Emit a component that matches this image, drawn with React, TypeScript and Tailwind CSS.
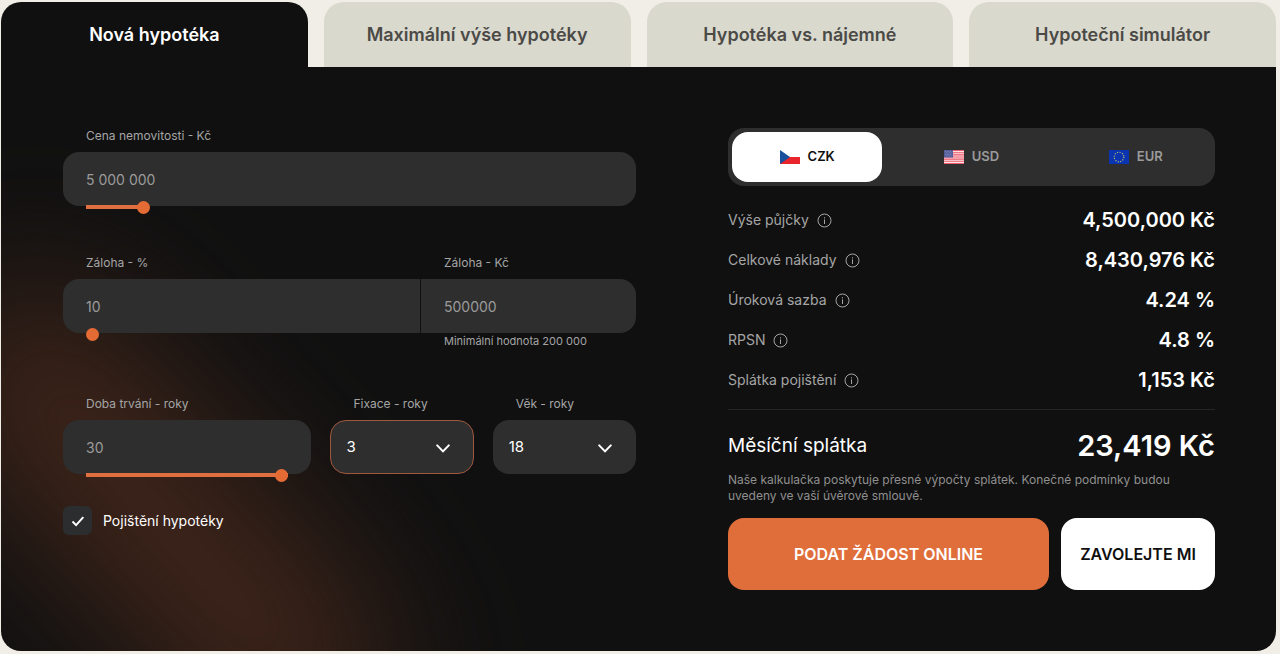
import { useState } from "react";
import type { ReactNode } from "react";

const TABS = [
	"Nová hypotéka",
	"Maximální výše hypotéky",
	"Hypotéka vs. nájemné",
	"Hypoteční simulátor",
];

const CURRENCIES = [
	{ code: "CZK", flag: <CzechFlag /> },
	{ code: "USD", flag: <UsFlag /> },
	{ code: "EUR", flag: <EuFlag /> },
];

const RESULTS = [
	{ label: "Výše půjčky", value: "4,500,000 Kč" },
	{ label: "Celkové náklady", value: "8,430,976 Kč" },
	{ label: "Úroková sazba", value: "4.24 %" },
	{ label: "RPSN", value: "4.8 %" },
	{ label: "Splátka pojištění", value: "1,153 Kč" },
];

function App() {
	const [tab, setTab] = useState(0);

	return (
		<div className="min-h-screen bg-[#f0eee6] pt-0.5 pr-1 pb-[3px] pl-px font-[Inter,sans-serif]">
			<nav className="grid grid-cols-4 gap-4">
				{TABS.map((title, i) => (
					<button
						key={title}
						onClick={() => setTab(i)}
						className={
							i === tab
								? "h-[65px] rounded-t-[20px] bg-[#101010] text-lg font-semibold text-white"
								: "h-[65px] rounded-t-[20px] bg-[#dad9cd] text-lg font-semibold text-[#4b4a47]"
						}
					>
						{title}
					</button>
				))}
			</nav>

			<main className="relative isolate grid grid-cols-[573fr_487fr] gap-[92px] overflow-hidden rounded-b-[20px] bg-[#101010] py-[61px] pr-[61px] pl-[62px]">
				<div className="absolute bottom-8 -left-32 -z-10 h-48 w-[580px] rotate-[48deg] rounded-full bg-[#40251a] blur-[72px]" />
				<MortgageForm />
				<Summary />
			</main>
		</div>
	);
}

function MortgageForm() {
	const [price, setPrice] = useState(5000000);
	const [deposit, setDeposit] = useState(10);
	const [years, setYears] = useState(30);
	const [fixation, setFixation] = useState("3");
	const [age, setAge] = useState("18");
	const [insurance, setInsurance] = useState(true);

	return (
		<form className="flex flex-col">
			<div>
				<FieldLabel htmlFor="price">Cena nemovitosti - Kč</FieldLabel>
				<div className="relative">
					<input
						id="price"
						type="text"
						value={price.toLocaleString("en-US").replace(/,/g, " ")}
						onChange={(e) =>
							setPrice(Number(e.target.value.replace(/\D/g, "")))
						}
						className="h-[54px] w-full rounded-2xl bg-[#2e2e2e] px-[23px] text-sm text-[#9b9b9b] outline-none"
					/>
					<Slider
						label="Cena nemovitosti"
						min={500000}
						max={45500000}
						value={price}
						onChange={setPrice}
					/>
				</div>
			</div>

			<div className="mt-[49px] grid grid-cols-[357fr_215fr] gap-px">
				<div>
					<FieldLabel htmlFor="deposit">Záloha - %</FieldLabel>
					<div className="relative">
						<input
							id="deposit"
							type="text"
							value={deposit}
							onChange={(e) =>
								setDeposit(Number(e.target.value.replace(/\D/g, "")))
							}
							className="h-[54px] w-full rounded-l-2xl bg-[#2e2e2e] px-[23px] text-sm text-[#9b9b9b] outline-none"
						/>
						<Slider
							label="Záloha v procentech"
							min={10}
							max={90}
							value={deposit}
							onChange={setDeposit}
						/>
					</div>
				</div>
				<div>
					<FieldLabel htmlFor="deposit-amount">Záloha - Kč</FieldLabel>
					<input
						id="deposit-amount"
						type="text"
						readOnly
						value={(price * deposit) / 100}
						className="h-[54px] w-full rounded-r-2xl bg-[#2e2e2e] px-[23px] text-sm text-[#9b9b9b] outline-none"
					/>
					<p className="pl-[23px] text-[11px] leading-4 text-[#a5a5a5]">
						Minimální hodnota 200 000
					</p>
				</div>
			</div>

			<div className="mt-[47px] grid grid-cols-[248fr_143fr_143fr] gap-[19px]">
				<div>
					<FieldLabel htmlFor="years">Doba trvání - roky</FieldLabel>
					<div className="relative">
						<input
							id="years"
							type="text"
							value={years}
							onChange={(e) =>
								setYears(Number(e.target.value.replace(/\D/g, "")))
							}
							className="h-[54px] w-full rounded-2xl bg-[#2e2e2e] px-[23px] text-sm text-[#9b9b9b] outline-none"
						/>
						<Slider
							label="Doba trvání"
							min={5}
							max={30}
							value={years}
							onChange={setYears}
						/>
					</div>
				</div>
				<div>
					<FieldLabel htmlFor="fixation">Fixace - roky</FieldLabel>
					<div className="relative">
						<select
							id="fixation"
							value={fixation}
							onChange={(e) => setFixation(e.target.value)}
							className="h-[54px] w-full appearance-none rounded-2xl border border-[#a0583c] bg-[#2e2e2e] px-[15px] text-[15px] text-white outline-none"
						>
							<option>1</option>
							<option>3</option>
							<option>5</option>
							<option>10</option>
						</select>
						<Chevron />
					</div>
				</div>
				<div>
					<FieldLabel htmlFor="age">Věk - roky</FieldLabel>
					<div className="relative">
						<select
							id="age"
							value={age}
							onChange={(e) => setAge(e.target.value)}
							className="h-[54px] w-full appearance-none rounded-2xl border border-transparent bg-[#2e2e2e] px-[15px] text-[15px] text-white outline-none"
						>
							<option>18</option>
							<option>30</option>
							<option>45</option>
							<option>60</option>
						</select>
						<Chevron />
					</div>
				</div>
			</div>

			<label className="mt-8 flex items-center gap-[11px] self-start text-sm text-white">
				<span className="relative flex">
					<input
						type="checkbox"
						checked={insurance}
						onChange={(e) => setInsurance(e.target.checked)}
						className="peer size-[29px] appearance-none rounded-md bg-[#2b2d2e]"
					/>
					<svg
						viewBox="0 0 29 29"
						className="pointer-events-none absolute inset-0 hidden size-[29px] peer-checked:block"
						fill="none"
						stroke="white"
						strokeWidth="2"
					>
						<path d="M9.5 15.5l3.6 3.6 7.2-8" />
					</svg>
				</span>
				Pojištění hypotéky
			</label>
		</form>
	);
}

function FieldLabel({
	htmlFor,
	children,
}: {
	htmlFor: string;
	children: ReactNode;
}) {
	return (
		<label
			htmlFor={htmlFor}
			className="mb-2 block pl-[23px] text-xs leading-4 text-[#a5a5a5]"
		>
			{children}
		</label>
	);
}

// Sits on the bottom edge of the text field it belongs to
function Slider({
	label,
	min,
	max,
	value,
	onChange,
}: {
	label: string;
	min: number;
	max: number;
	value: number;
	onChange: (value: number) => void;
}) {
	const filled = ((value - min) / (max - min)) * 100;

	return (
		<input
			type="range"
			aria-label={label}
			min={min}
			max={max}
			value={value}
			onChange={(e) => onChange(Number(e.target.value))}
			style={{
				backgroundImage: `linear-gradient(to right, #df6f3f ${filled}%, transparent ${filled}%)`,
			}}
			className="absolute inset-x-[23px] -bottom-[3px] h-1 appearance-none [&::-webkit-slider-thumb]:size-[13px] [&::-webkit-slider-thumb]:appearance-none [&::-webkit-slider-thumb]:rounded-full [&::-webkit-slider-thumb]:bg-[#e56b35]"
		/>
	);
}

function Summary() {
	const [currency, setCurrency] = useState("CZK");

	return (
		<section className="flex flex-col">
			<div className="grid grid-cols-3 gap-3.5 rounded-2xl bg-[#2e2e2e] p-1">
				{CURRENCIES.map(({ code, flag }) => (
					<button
						key={code}
						onClick={() => setCurrency(code)}
						className={
							code === currency
								? "flex h-[50px] items-center justify-center gap-2 rounded-2xl bg-white text-[13px] font-semibold text-[#101010]"
								: "flex h-[50px] items-center justify-center gap-2 rounded-2xl text-[13px] font-semibold text-[#9b9b9b]"
						}
					>
						{flag}
						{code}
					</button>
				))}
			</div>

			<dl className="mt-3.5 border-b border-[#262626] pb-[9px]">
				{RESULTS.map(({ label, value }) => (
					<div key={label} className="flex h-10 items-center justify-between">
						<dt className="flex items-center gap-2 text-sm text-[#a5a5a5]">
							{label}
							<InfoIcon />
						</dt>
						<dd className="text-xl font-semibold text-white">{value}</dd>
					</div>
				))}
			</dl>

			<div className="mt-4 flex h-10 items-center justify-between text-white">
				<span className="text-[19px]">Měsíční splátka</span>
				<span className="text-[29px] font-semibold">23,419 Kč</span>
			</div>
			<p className="mt-1.5 text-xs leading-4 text-[#8f8f8f]">
				Naše kalkulačka poskytuje přesné výpočty splátek. Konečné podmínky budou
				<br />
				uvedeny ve vaší úvěrové smlouvě.
			</p>

			<div className="mt-3.5 grid grid-cols-[321fr_154fr] gap-3">
				<button className="h-[72px] rounded-2xl bg-[#df6e3b] font-semibold text-white">
					PODAT ŽÁDOST ONLINE
				</button>
				<button className="h-[72px] rounded-2xl bg-white font-semibold whitespace-nowrap text-[#101010]">
					ZAVOLEJTE MI
				</button>
			</div>
		</section>
	);
}

function Chevron() {
	return (
		<svg
			viewBox="0 0 14 9"
			className="pointer-events-none absolute top-6 right-6 h-[9px] w-3.5"
			fill="none"
			stroke="white"
			strokeWidth="2"
			strokeLinecap="round"
		>
			<path d="M1.2 1.4L7 7.4l5.8-6" />
		</svg>
	);
}

function InfoIcon() {
	return (
		<svg
			viewBox="0 0 15 15"
			className="size-[15px]"
			fill="none"
			stroke="#a5a5a5"
		>
			<circle cx="7.5" cy="7.5" r="6.5" />
			<path d="M7.5 6.4v4.6M7.5 4.2v1.2" />
		</svg>
	);
}

function CzechFlag() {
	return (
		<svg viewBox="0 0 20 14" className="h-3.5 w-5">
			<path fill="#fff" d="M0 0h20v7H0z" />
			<path fill="#e8242c" d="M0 7h20v7H0z" />
			<path fill="#19509c" d="M0 0l10 7-10 7z" />
		</svg>
	);
}

function UsFlag() {
	return (
		<svg viewBox="0 0 20 14" className="h-3.5 w-5">
			<path fill="#fbe3e6" d="M0 0h20v14H0z" />
			<path
				stroke="#ec5a6b"
				strokeWidth="1.08"
				d="M0 .54h20M0 2.7h20M0 4.85h20M0 7h20M0 9.15h20M0 11.3h20M0 13.46h20"
			/>
			<path fill="#515b98" d="M0 0h9v7.5H0z" />
			<path
				stroke="#a9aed0"
				strokeWidth=".7"
				strokeDasharray=".7 1.1"
				d="M1 1.4h7.5M1.9 2.9h6M1 4.4h7.5M1.9 5.9h6"
			/>
		</svg>
	);
}

function EuFlag() {
	return (
		<svg viewBox="0 0 20 14" className="h-3.5 w-5">
			<path fill="#0b34b0" d="M0 0h20v14H0z" />
			<circle
				cx="10"
				cy="7"
				r="4.8"
				fill="none"
				stroke="#b9c06a"
				strokeWidth="1.2"
				strokeDasharray="1.1 1.413"
			/>
		</svg>
	);
}

export default App;
